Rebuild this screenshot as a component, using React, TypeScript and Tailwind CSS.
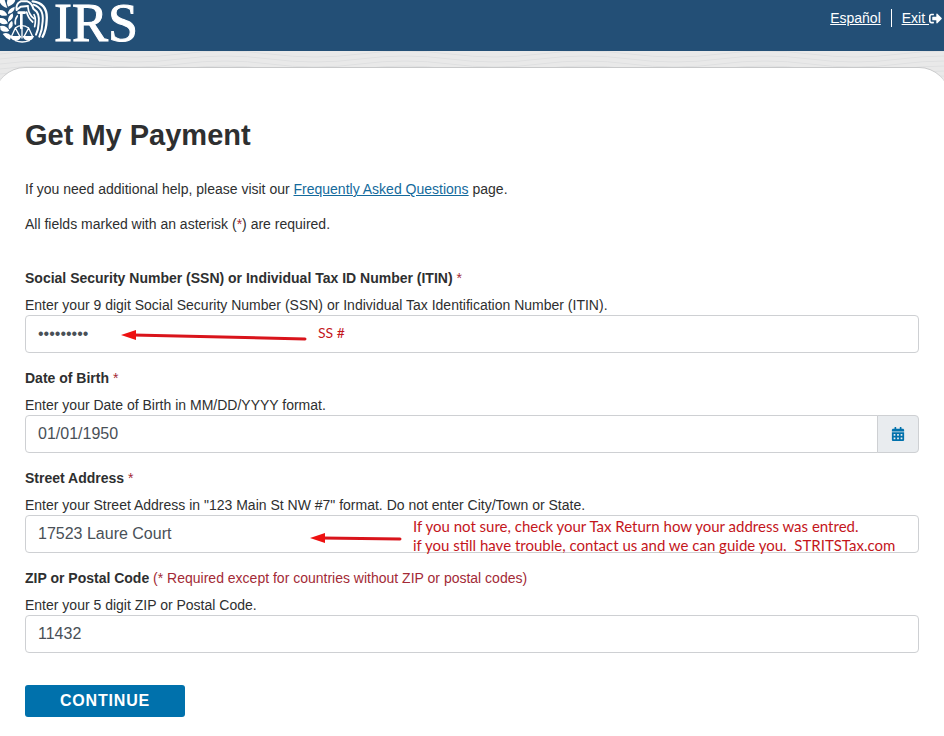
import { useState, type ReactNode } from "react";
import { FaCalendarAlt, FaSignOutAlt } from "react-icons/fa";

function Emblem() {
  return (
    <svg viewBox="0 0 144 132" className="h-[44px] w-[48px] shrink-0" fill="white" aria-hidden="true">
      {/* laurel branch */}
      <path d="M0 0H14L22 24Q6 20 0 8ZM22 0H46Q44 12 24 20Q18 10 22 0Z" />
      <path d="M0 30Q16 30 22 46Q8 50 0 44ZM24 42Q24 26 44 20Q46 36 24 42Z" />
      <path d="M0 54Q16 52 24 70Q10 76 0 68ZM24 66Q22 48 38 40Q44 56 24 66Z" />
      <path d="M0 78Q18 74 28 92Q14 100 2 90ZM27 88Q22 72 36 62Q44 78 27 88Z" />
      <path d="M8 102Q22 94 34 108L30 120Q16 114 8 102Z" />
      {/* eagle head, arm and scales */}
      <g fill="none" stroke="white" strokeLinecap="round" strokeLinejoin="round">
        <path strokeWidth="6" d="M50 30Q46 12 62 4H82Q96 10 100 26M50 30L62 20L84 18" />
        <path strokeWidth="8" d="M56 38H74M64 38V84" />
        <path strokeWidth="5" d="M84 22Q86 44 102 56M80 36Q84 54 98 66M52 48Q44 58 46 72" />
        <path strokeWidth="4" d="M46 84Q64 70 86 84M46 84L34 110M46 84L60 110M86 84L72 110M86 84L98 110M66 84V114" />
        <path strokeWidth="4" d="M46 122Q66 130 88 122" />
      </g>
      <path d="M30 108H64Q60 122 47 122Q34 122 30 108ZM68 108H102Q98 122 85 122Q72 122 68 108Z" />
      {/* wing feathers */}
      <g fill="none" stroke="white" strokeLinecap="round">
        <path strokeWidth="7" d="M98 4Q144 10 140 60Q139 90 128 110" />
        <path strokeWidth="6" d="M100 14Q132 24 128 64Q127 90 118 110" />
        <path strokeWidth="6" d="M102 28Q120 38 116 70Q115 90 108 104" />
        <path strokeWidth="5" d="M102 44Q109 56 104 80" />
      </g>
    </svg>
  );
}

function WaveBand() {
  return (
    <svg className="absolute inset-0 h-[40px] w-full" aria-hidden="true">
      <defs>
        <pattern id="waves" width="180" height="40" patternUnits="userSpaceOnUse">
          <g fill="none" stroke="#dfe0e1">
            <path d="M0 3Q45 -3 90 3T180 3M0 8Q45 2 90 8T180 8M0 13Q45 7 90 13T180 13M0 18Q45 12 90 18T180 18M0 23Q45 17 90 23T180 23M0 28Q45 22 90 28T180 28" />
          </g>
        </pattern>
      </defs>
      <rect width="100%" height="40" fill="url(#waves)" />
    </svg>
  );
}

function Arrow({ length, drop, className }: { length: number; drop: number; className: string }) {
  return (
    <svg width={length} height="14" className={`pointer-events-none absolute ${className}`} aria-hidden="true">
      <path d={`M12 5L${length - 2} ${5 + drop}`} stroke="#d9141b" strokeWidth="3" strokeLinecap="round" />
      <path d="M0 5L15 0V10Z" fill="#ee1111" />
    </svg>
  );
}

type FieldProps = {
  id: string;
  label: string;
  note?: string;
  hint: string;
  initial: string;
  type?: string;
  addon?: ReactNode;
  children?: ReactNode;
};

function Field({ id, label, note = "*", hint, initial, type = "text", addon, children }: FieldProps) {
  const [value, setValue] = useState(initial);
  return (
    <div className="mb-[15px]">
      <label htmlFor={id} className="block text-sm leading-[20px]">
        <b>{label}</b> <span className="text-[#a32a36]">{note}</span>
      </label>
      <p id={`${id}-hint`} className="mt-[7px] text-sm leading-[20px]">{hint}</p>
      <div className="relative flex h-[38px]">
        <input
          id={id}
          type={type}
          value={value}
          aria-describedby={`${id}-hint`}
          onChange={(e) => setValue(e.target.value)}
          className={`min-w-0 flex-1 border border-[#ced0d3] bg-white px-3 text-base text-[#495057] ${addon ? "rounded-l" : "rounded"}`}
        />
        {addon}
        {children}
      </div>
    </div>
  );
}

export default function App() {
  return (
    <div className="min-h-screen bg-white font-['Liberation_Sans',Arial,sans-serif] text-[#2e2f30]">
      <header className="flex h-[51px] items-start justify-between bg-[#234f76] text-white">
        <div className="flex items-start">
          <Emblem />
          <span className="ml-[6px] font-['Liberation_Serif',serif] text-[54px] leading-[46px] [-webkit-text-stroke:1px_white]">IRS</span>
        </div>
        <nav className="flex items-center pt-[8px] pr-[2px] text-sm leading-[20px]">
          <a href="#es" className="border-r border-white pr-[10px] leading-[18px] underline">Español</a>
          <a href="#exit" className="flex items-center pl-[10px] underline">
            <span className="whitespace-pre underline">Exit </span>
            <FaSignOutAlt className="text-[13px]" />
          </a>
        </nav>
      </header>

      <div className="relative overflow-hidden bg-[#e9e9e9] pt-[16px]">
        <WaveBand />
        <main className="relative -mx-[5px] rounded-t-[30px] border-t border-[#c8c9ca] bg-white px-[30px] pt-[47px] pb-[19px]">
          <h1 className="text-[29px] leading-[40px] font-bold">Get My Payment</h1>
          <p className="mt-[24px] text-sm leading-[20px]">
            If you need additional help, please visit our{" "}
            <a href="#faq" className="text-[#146a9c] underline">Frequently Asked Questions</a> page.
          </p>
          <p className="mt-[15px] text-sm leading-[20px]">
            All fields marked with an asterisk (<span className="text-[#a32a36]">*</span>) are required.
          </p>

          <form className="mt-[34px]" onSubmit={(e) => e.preventDefault()}>
            <Field
              id="ssn"
              type="password"
              label="Social Security Number (SSN) or Individual Tax ID Number (ITIN)"
              hint="Enter your 9 digit Social Security Number (SSN) or Individual Tax Identification Number (ITIN)."
              initial="123456789"
            >
              <Arrow length={186} drop={4} className="top-[15px] left-[96px]" />
              <span className="pointer-events-none absolute top-[8px] left-[293px] font-[Lato,sans-serif] text-sm leading-[20px] text-[#c4161c]">SS #</span>
            </Field>
            <Field
              id="dob"
              label="Date of Birth"
              hint="Enter your Date of Birth in MM/DD/YYYY format."
              initial="01/01/1950"
              addon={
                <button
                  type="button"
                  aria-label="Choose date"
                  className="-ml-px flex w-[42px] items-center justify-center rounded-r border border-[#ced0d3] bg-[#e9ecef] text-sm text-[#0071ac]"
                >
                  <FaCalendarAlt />
                </button>
              }
            />
            <Field
              id="street"
              label="Street Address"
              hint={'Enter your Street Address in "123 Main St NW #7" format. Do not enter City/Town or State.'}
              initial="17523 Laure Court"
            >
              <Arrow length={92} drop={1} className="top-[18px] left-[285px]" />
              <p className="pointer-events-none absolute top-[2px] left-[388px] font-[Lato,sans-serif] text-[15px] leading-[19px] whitespace-pre text-[#c4161c]">
                If you not sure, check your Tax Return how your address was entred.{"\n"}
                if you still have trouble, contact us and we can guide you.{"  "}STRITSTax.com
              </p>
            </Field>
            <Field
              id="zip"
              label="ZIP or Postal Code"
              note="(* Required except for countries without ZIP or postal codes)"
              hint="Enter your 5 digit ZIP or Postal Code."
              initial="11432"
            />
            <button
              type="submit"
              className="mt-[32px] block h-[32px] w-[160px] rounded-[3px] bg-[#0071ac] text-base leading-[32px] font-bold tracking-wider text-white"
            >
              CONTINUE
            </button>
          </form>
        </main>
      </div>
    </div>
  );
}
